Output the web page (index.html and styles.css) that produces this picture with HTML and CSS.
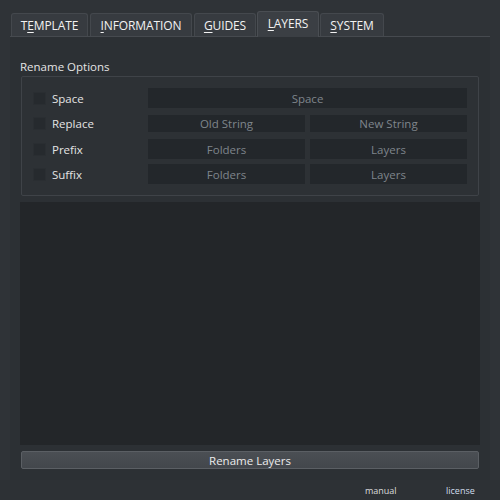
FILE: index.html
```html
<!DOCTYPE html>
<html>
<head>
<meta charset="utf-8">
<link rel="stylesheet" href="styles.css">
</head>
<body>
<div class="window">
  <div class="tabs">
    <div class="tab t1">T<u>E</u>MPLATE</div>
    <div class="tab t2"><u>I</u>NFORMATION</div>
    <div class="tab t3"><u>G</u>UIDES</div>
    <div class="tab t4 active"><u>L</u>AYERS</div>
    <div class="tab t5"><u>S</u>YSTEM</div>
  </div>
  <div class="panel">
    <div class="title">Rename Options</div>
    <div class="group">
      <div class="row r-space">
        <span class="cb"></span><span class="label">Space</span>
        <span class="field">Space</span>
      </div>
      <div class="row r-replace">
        <span class="cb"></span><span class="label">Replace</span>
        <span class="field">Old String</span><span class="field">New String</span>
      </div>
      <div class="row r-prefix">
        <span class="cb"></span><span class="label">Prefix</span>
        <span class="field">Folders</span><span class="field">Layers</span>
      </div>
      <div class="row r-suffix">
        <span class="cb"></span><span class="label">Suffix</span>
        <span class="field">Folders</span><span class="field">Layers</span>
      </div>
    </div>
    <div class="list"></div>
    <div class="button">Rename Layers</div>
  </div>
  <div class="footer">
    <span class="link manual">manual</span>
    <span class="link license">license</span>
  </div>
</div>
</body>
</html>
```
FILE: styles.css
```css
html, body {
  margin: 0;
  padding: 0;
  background: #2f3337;
}
.window {
  width: 500px;
  height: 500px;
  font-family: "Open Sans", "Noto Sans", sans-serif;
  color: #e4e4e4;
  display: flex;
  flex-direction: column;
}
.tabs {
  display: flex;
  align-items: flex-end;
  padding: 11px 0 0 11px;
  height: 25px;
  gap: 2px;
}
.tab {
  box-sizing: border-box;
  height: 23px;
  border: 1px solid #44484d;
  border-bottom: none;
  border-radius: 3px 3px 0 0;
  background: #373b40;
  color: #f2f2f2;
  font-size: 12px;
  letter-spacing: -0.1px;
  display: flex;
  align-items: center;
  justify-content: center;
  padding-top: 1px;
}
.tab u { text-decoration-thickness: 1px; text-underline-offset: 2px; }
.t1 { width: 77px; }
.t2 { width: 102px; }
.t3 { width: 62px; }
.t4 { width: 62px; margin: 0 -1px; }
.t5 { width: 64px; }
.tab.active {
  height: 26px;
  background: #3b3f44;
  border-color: #4a4e53;
  padding-top: 0;
  padding-bottom: 2px;
  position: relative;
  z-index: 1;
  margin-bottom: -1px;
}
.panel {
  box-sizing: border-box;
  margin: 0 10px;
  height: 444px;
  border-top: 1px solid #464a4f;
  background: #2c3034;
  padding: 0 10px 0 10px;
  display: flex;
  flex-direction: column;
}
.title {
  font-size: 11.5px;
  line-height: 16px;
  margin-top: 22px;
  margin-bottom: 1px;
}
.group {
  box-sizing: border-box;
  margin: 0 1px;
  height: 120px;
  border: 1px solid #3f4348;
  border-radius: 2px;
  background: #2d3135;
  padding: 11px 11px 0 11px;
}
.row {
  display: flex;
  align-items: center;
  gap: 5px;
  height: 20px;
}
.r-replace { margin-top: 7px; height: 17px; }
.r-prefix { margin-top: 7px; }
.r-suffix { margin-top: 5px; }
.cb {
  box-sizing: border-box;
  width: 13px;
  height: 13px;
  background: #262a2e;
  border: 1px solid #2a2e32;
  margin-right: 1px;
}
.label {
  width: 91px;
  font-size: 11.5px;
}
.field {
  flex: 1;
  align-self: stretch;
  background: #23272b;
  color: #7f858b;
  font-size: 11.5px;
  display: flex;
  align-items: center;
  justify-content: center;
}
.list {
  margin-top: 6px;
  height: 243px;
  background: #232629;
}
.button {
  box-sizing: border-box;
  margin: 6px 1px 0 1px;
  height: 18px;
  border: 1px solid #5b5f64;
  border-radius: 2px;
  background: linear-gradient(#4b4f54, #43474c);
  color: #ececec;
  font-size: 11.5px;
  display: flex;
  align-items: center;
  justify-content: center;
}
.footer {
  flex: 1;
  background: #2d3135;
  position: relative;
  font-size: 9px;
}
.link {
  position: absolute;
  top: 4px;
  color: #dcdcdc;
}
.manual { left: 365px; }
.license { left: 446px; color: #cfdcec; }
```
